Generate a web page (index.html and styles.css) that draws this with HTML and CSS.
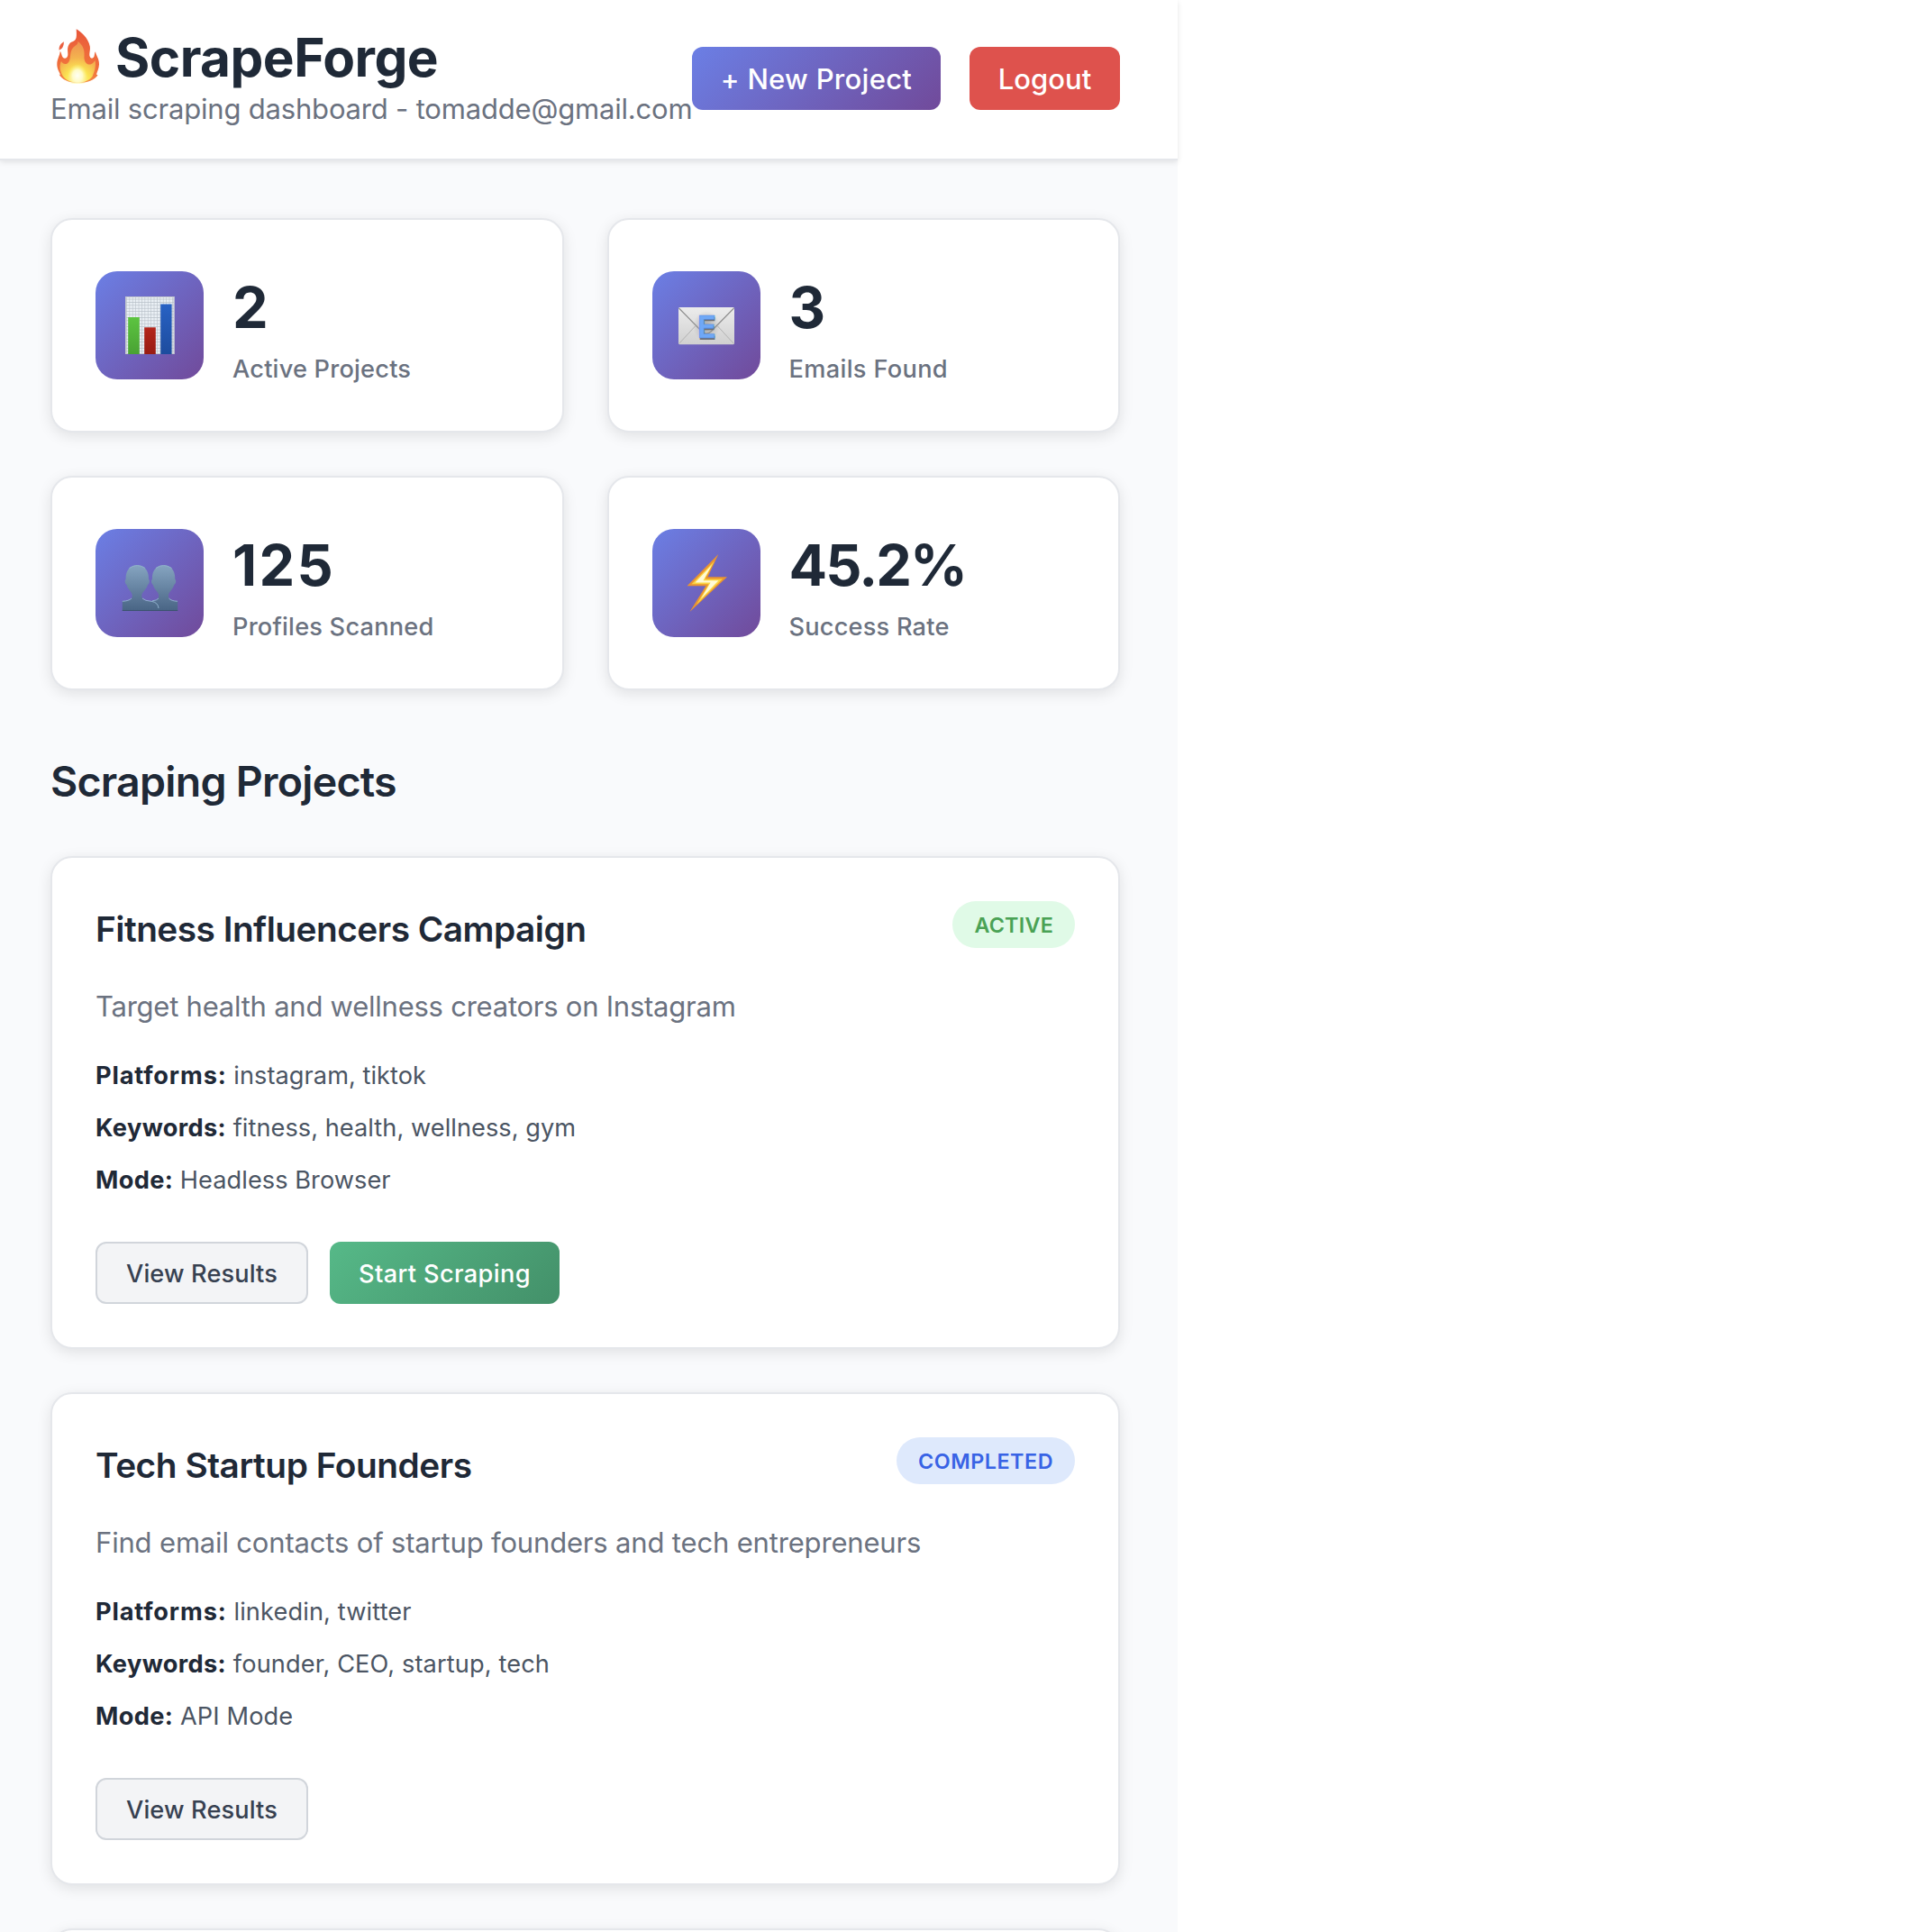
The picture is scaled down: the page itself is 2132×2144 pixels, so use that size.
FILE: index.html
```html
<!DOCTYPE html>
<html lang="en">
<head>
<meta charset="utf-8">
<title>ScrapeForge</title>
<link rel="stylesheet" href="styles.css">
</head>
<body>
<div class="app">
  <header class="header">
    <div class="brand">
      <h1 class="brand-name">
        <svg class="brand-icon" viewBox="0 0 60 62" aria-hidden="true">
          <defs>
            <radialGradient id="flame" gradientUnits="userSpaceOnUse" cx="30" cy="60" r="58">
              <stop offset="0" stop-color="#f6a04a"/><stop offset=".45" stop-color="#f0703c"/><stop offset="1" stop-color="#e8573a"/>
            </radialGradient>
            <radialGradient id="flame-mid" gradientUnits="userSpaceOnUse" cx="30" cy="58" r="42">
              <stop offset="0" stop-color="#fffbe0"/><stop offset=".3" stop-color="#fbe552"/><stop offset=".6" stop-color="#f4b24f"/><stop offset="1" stop-color="#ee9350"/>
            </radialGradient>
            <radialGradient id="flame-core">
              <stop offset="0" stop-color="#fffff4"/><stop offset=".5" stop-color="#fffbc8"/><stop offset="1" stop-color="#fdf07a" stop-opacity="0"/>
            </radialGradient>
          </defs>
          <path fill="url(#flame)" d="M28.7 1.3C34 4.500 42 11 43.800 20.500C44.500 25 42.500 29 43.800 32C45 34.500 47.500 34 48.500 31.500C49.300 29.500 48.500 28 50 26.300C50.500 31 54.300 34 54 40.500C53.800 45.500 52 48 51 51.500L52.500 52.500C49 57.500 41 61 30.500 61C20 61 12.500 57 9.500 51.500L11 52C9.500 48 7.300 45.500 7.300 40.500C7.300 34 10.500 31 10.700 25.700C12.500 27.500 12 31 14 33C16 34.500 19 33.500 19.300 30C19.600 26 18 23 20.500 18.500C22 15.500 24 15.500 26 14.500C30 12.500 28.800 6 28.700 1.300Z"/>
          <path fill="#ea6040" d="M14.800 15.300C15 18 14.500 19.500 13.500 21.500C12.500 23.500 10.700 23.500 9.800 25C9 21 11 17.500 14.800 15.300Z"/>
          <path fill="url(#flame-mid)" d="M30.500 15C36 19 38 24 37.500 31C37 36 39 40 42.500 40.500C46.500 41 48 38 49.500 36C51 43 48.500 49 46.500 54C43 58.500 37 60.500 30.500 60.500C22 60.500 16 57.500 13.500 53C10.500 47.500 9.500 41.500 12 37C14 41 18.500 41 20.500 37.500C23 33 21 26 25.500 21.500C28 19 30.500 18.500 30.500 15Z"/>
          <ellipse cx="30" cy="53" rx="11" ry="13" fill="url(#flame-core)"/>
        </svg>
        <span>ScrapeForge</span>
      </h1>
      <p class="brand-sub">Email scraping dashboard - tomadde@gmail.com</p>
    </div>
    <div class="header-actions">
      <button class="btn btn-primary">+ New Project</button>
      <button class="btn btn-danger">Logout</button>
    </div>
  </header>

  <main class="main">
    <section class="stats">
      <div class="stat-card">
        <div class="stat-icon">
          <svg viewBox="0 0 120 120" aria-hidden="true">
            <defs>
              <pattern id="grid" width="3.4" height="3.4" patternUnits="userSpaceOnUse"><path d="M0 0H3.400M0 0V3.400" stroke="#b4bcc5" stroke-width="1.100"/></pattern>
              <linearGradient id="bar-green" x2="0" y2="1"><stop stop-color="#5dc441"/><stop offset="1" stop-color="#49a233"/></linearGradient>
              <linearGradient id="bar-red" x2="0" y2="1"><stop stop-color="#b3261b"/><stop offset="1" stop-color="#981c13"/></linearGradient>
              <linearGradient id="bar-blue" x2="0" y2="1"><stop stop-color="#2862c4"/><stop offset="1" stop-color="#1d4c9e"/></linearGradient>
            </defs>
            <rect x="33" y="28" width="54.500" height="64" fill="#eaf0f5"/>
            <rect x="33" y="28" width="54.500" height="64" fill="url(#grid)"/>
            <rect x="33.500" y="28.500" width="53.500" height="63" fill="none" stroke="#c3c7ce"/>
            <rect x="36.200" y="51" width="12.600" height="41" fill="url(#bar-green)"/>
            <rect x="54.200" y="62.300" width="12.600" height="29.700" fill="url(#bar-red)"/>
            <rect x="72.200" y="36.500" width="12.400" height="55.500" fill="url(#bar-blue)"/>
          </svg>
        </div>
        <div class="stat-info">
          <div class="stat-value">2</div>
          <div class="stat-label">Active Projects</div>
        </div>
      </div>
      <div class="stat-card">
        <div class="stat-icon">
          <svg viewBox="0 0 120 120" aria-hidden="true">
            <defs>
              <linearGradient id="paper" x2="0" y2="1"><stop stop-color="#ececec"/><stop offset="1" stop-color="#d0d0d0"/></linearGradient>
              <radialGradient id="glow"><stop stop-color="#777" stop-opacity=".6"/><stop offset="1" stop-color="#999" stop-opacity="0"/></radialGradient>
            </defs>
            <rect x="29" y="40" width="62" height="41.300" rx="1.500" fill="url(#paper)"/>
            <path d="M29.500 80.500L47.500 61M90.500 80.500L72.500 61" stroke="#b3b3b3" stroke-width="1" fill="none"/>
            <path d="M29.500 41L55 67Q60 71.500 65 67L90.500 41" stroke="#8f8f8f" stroke-width="1.200" fill="none"/>
            <ellipse cx="60" cy="61" rx="15" ry="17" fill="url(#glow)"/>
            <text class="mail-letter mail-shadow" x="50.500" y="76">E</text>
            <text class="mail-letter mail-face" x="50" y="73.500">E</text>
          </svg>
        </div>
        <div class="stat-info">
          <div class="stat-value">3</div>
          <div class="stat-label label-emails">Emails Found</div>
        </div>
      </div>
      <div class="stat-card">
        <div class="stat-icon">
          <svg viewBox="0 0 120 120" aria-hidden="true">
            <defs>
              <linearGradient id="bust" gradientUnits="userSpaceOnUse" x1="0" y1="40" x2="0" y2="91"><stop stop-color="#86a5c1"/><stop offset="1" stop-color="#486484"/></linearGradient>
            </defs>
            <path fill="url(#bust)" d="M75.600 40.300C83 40.300 88.500 45 88.300 56C90 57 89 61 87.300 62C86 67 81 70 81 74C81 79.500 85 79.700 91.200 80V91H59V80C65 79.700 70.200 79.500 70.200 74C70.200 70 65 67 63.800 62C62.200 61 61.200 57 62.900 56C62.700 45 68.200 40.300 75.600 40.300Z"/>
            <path fill="url(#bust)" d="M46.300 40.300C53.700 40.300 59.200 45 59 56C60.700 57 59.700 61 58 62C56.700 67 51.300 70 51.300 74C51.300 79.500 56 79.700 62 80C67 80.500 70 85 70 91H29.800V80C36 79.700 40.800 79.500 40.800 74C40.800 70 35.700 67 34.500 62C32.900 61 31.900 57 33.600 56C33.400 45 38.900 40.300 46.300 40.300Z"/>
            <path fill="none" stroke="#8fb0cc" stroke-width="1" d="M37.500 43.500Q46.300 37.500 55 43.500M67 43.500Q75.600 37.500 84.500 43.500M29.800 80.300Q37 80 40 77M52 77Q55 80 62 80.300Q69.500 81.500 70 88M81.500 77Q84 80 91 80.300M63 79.800Q68 79.500 70 77"/>
            <path stroke="#3c5370" stroke-width="1" d="M29.800 90.500H91.200"/>
          </svg>
        </div>
        <div class="stat-info">
          <div class="stat-value value-wide">125</div>
          <div class="stat-label">Profiles Scanned</div>
        </div>
      </div>
      <div class="stat-card">
        <div class="stat-icon">
          <svg viewBox="0 0 120 120" aria-hidden="true">
            <path fill="#ea9430" d="M73.300 28L61.500 53.300H83L41.500 92L59.300 63.200H38.500Z"/>
            <path fill="#fbd441" d="M69 35.500L58.500 55.500H78L49 84L62.500 61.300H43.500Z"/>
            <path fill="#fffbd6" d="M66 40L56.500 57.200H73.500L54 77.500L64.500 59.500H47.500Z"/>
          </svg>
        </div>
        <div class="stat-info">
          <div class="stat-value value-tight">45.2%</div>
          <div class="stat-label">Success Rate</div>
        </div>
      </div>
    </section>

    <h2 class="section-title">Scraping Projects</h2>

    <section class="projects">
      <article class="project">
        <div class="project-head">
          <h3 class="project-title">Fitness Influencers Campaign</h3>
          <span class="badge badge-active">ACTIVE</span>
        </div>
        <p class="project-desc">Target health and wellness creators on Instagram</p>
        <div class="meta">
          <div><strong class="l-platforms">Platforms:</strong> instagram, tiktok</div>
          <div><strong class="l-keywords">Keywords:</strong> fitness, health, wellness, gym</div>
          <div><strong class="l-mode">Mode:</strong> Headless Browser</div>
        </div>
        <div class="project-actions">
          <button class="btn-sm btn-secondary">View Results</button>
          <button class="btn-sm btn-success">Start Scraping</button>
        </div>
      </article>
      <article class="project">
        <div class="project-head">
          <h3 class="project-title title-wide">Tech Startup Founders</h3>
          <span class="badge badge-completed">COMPLETED</span>
        </div>
        <p class="project-desc desc-wide">Find email contacts of startup founders and tech entrepreneurs</p>
        <div class="meta meta-wide">
          <div><strong class="l-platforms">Platforms:</strong> linkedin, twitter</div>
          <div><strong class="l-keywords">Keywords:</strong> founder, CEO, startup, tech</div>
          <div><strong class="l-mode">Mode:</strong> API Mode</div>
        </div>
        <div class="project-actions">
          <button class="btn-sm btn-secondary">View Results</button>
        </div>
      </article>
      <article class="project"></article>
    </section>
  </main>
</div>
</body>
</html>
```
FILE: styles.css
```css
* {
  box-sizing: border-box;
  margin: 0;
  padding: 0;
}

body {
  background: #fff;
  font-family: Inter, "Liberation Sans", sans-serif;
  color: #1f2937;
}

.app {
  width: 1307px;
  height: 2144px;
  overflow-x: visible;
  overflow-y: clip;
  background: #f9fafc;
}

/* Header */
.header {
  display: flex;
  justify-content: space-between;
  align-items: flex-start;
  height: 178px;
  padding: 34px 64px 0 56px;
  background: #fff;
  border-bottom: 2px solid #e5e7eb;
  box-shadow: 0 2px 6px rgba(0, 0, 0, 0.1);
}

.brand-name {
  display: flex;
  gap: 12px;
  height: 60px;
  font-size: 58.5px;
  line-height: 60px;
  font-weight: 700;
  letter-spacing: -0.55px;
}

.brand-icon {
  width: 60px;
  height: 62px;
  margin-top: -3px;
}

.brand-sub {
  width: 712px;
  margin-top: 1px;
  font-size: 31px;
  line-height: 51px;
  letter-spacing: -0.19px;
  white-space: nowrap;
  color: #6b7280;
}

.header-actions {
  display: flex;
  gap: 32px;
  margin-top: 18px;
}

button {
  border: none;
  font-family: inherit;
  white-space: nowrap;
}

.btn {
  height: 70px;
  padding-top: 1px;
  border-radius: 12px;
  font-size: 31px;
  line-height: 69px;
  font-weight: 500;
  color: #fff;
}

.btn-primary {
  width: 276px;
  letter-spacing: 0.29px;
  background: linear-gradient(135deg, #6b7fe5, #714a9a);
}

.btn-danger {
  width: 167px;
  background: #de524d;
}

/* Statistics */
.main {
  padding: 64px 64px 0 56px;
}

.stats {
  display: grid;
  grid-template-columns: 1fr 1fr;
  gap: 48px;
}

.stat-card,
.project {
  background: #fff;
  border: 2px solid #e5e7eb;
  border-radius: 24px;
  box-shadow: 0 4px 16px rgba(0, 0, 0, 0.1);
}

.stat-card {
  display: flex;
  align-items: center;
  gap: 32px;
  height: 238px;
  padding: 48px;
}

.stat-icon {
  width: 120px;
  height: 120px;
  border-radius: 24px;
  background: linear-gradient(135deg, #6b7fe5, #714a9a);
}

.stat-icon svg {
  display: block;
  width: 120px;
  height: 120px;
}

.mail-letter {
  font-size: 34px;
  font-weight: 700;
}

.mail-shadow {
  fill: #6d6f73;
}

.mail-face {
  fill: #6fa8f6;
  stroke: #4f8ce8;
  stroke-width: 0.6px;
}

.stat-value {
  font-size: 63px;
  line-height: 98px;
  font-weight: 700;
}

.value-wide {
  letter-spacing: 2.3px;
}

.value-tight {
  letter-spacing: -1.9px;
}

.stat-label {
  font-size: 27.2px;
  line-height: 40px;
  font-weight: 500;
  letter-spacing: 0.2px;
  color: #6b7280;
}

.label-emails {
  letter-spacing: 0.33px;
}

/* Projects */
.section-title {
  margin: 62px 0 44px;
  font-size: 46.5px;
  line-height: 78px;
  font-weight: 600;
  letter-spacing: -0.75px;
}

.projects {
  display: flex;
  flex-direction: column;
  gap: 48px;
}

.project {
  height: 547px;
  padding: 48px;
}

.project-head {
  display: flex;
  justify-content: space-between;
  align-items: flex-start;
  height: 62px;
}

.project-title {
  font-size: 38.8px;
  line-height: 62px;
  font-weight: 600;
  letter-spacing: -0.51px;
}

.title-wide {
  letter-spacing: -0.45px;
}

.badge {
  height: 52px;
  padding: 1px 24px 0;
  border-radius: 26px;
  font-size: 23.3px;
  line-height: 52px;
  font-weight: 600;
}

.badge-active {
  letter-spacing: 0.25px;
  background: #e0fae7;
  color: #4aa255;
}

.badge-completed {
  letter-spacing: 0.53px;
  background: #dee9fc;
  color: #3863e5;
}

.project-desc {
  margin-top: 29px;
  font-size: 31px;
  line-height: 51px;
  letter-spacing: -0.24px;
  color: #6b7280;
}

.desc-wide {
  letter-spacing: -0.17px;
}

.meta {
  display: flex;
  flex-direction: column;
  gap: 13px;
  margin-top: 29px;
  font-size: 27.2px;
  line-height: 45px;
  letter-spacing: 0.04px;
  color: #4b5563;
}

.meta-wide {
  letter-spacing: 0.12px;
}

.meta strong {
  font-weight: 700;
  color: #1f2937;
}

.meta .l-platforms {
  letter-spacing: 0.85px;
}

.meta .l-keywords {
  letter-spacing: 0.36px;
}

.meta .l-mode {
  letter-spacing: 0.35px;
}

.project-actions {
  display: flex;
  gap: 24px;
  margin-top: 46px;
}

.btn-sm {
  height: 69px;
  padding-top: 2px;
  border-radius: 12px;
  font-size: 27.2px;
  font-weight: 500;
}

.btn-secondary {
  width: 236px;
  border: 2px solid #d1d5db;
  background: #f3f4f6;
  color: #374151;
  letter-spacing: 0.12px;
}

.btn-success {
  width: 255px;
  background: linear-gradient(135deg, #56b988, #439069);
  color: #fff;
  letter-spacing: 0.36px;
}
```
